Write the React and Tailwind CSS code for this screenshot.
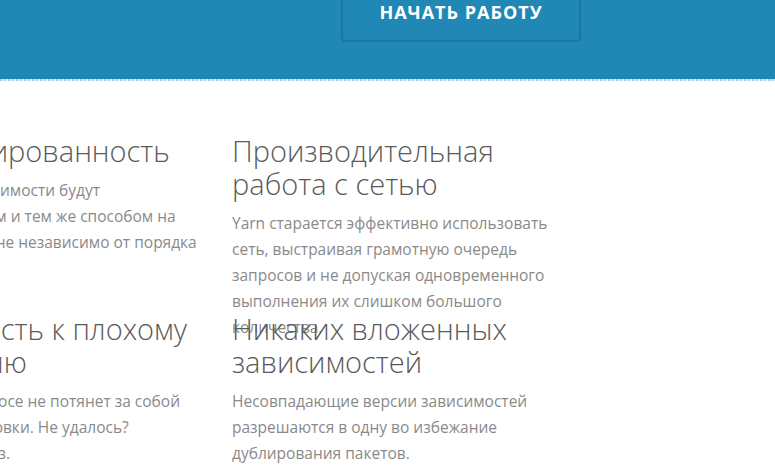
import React from 'react';

// строки разбиты вручную, как на исходной странице
const features = [
  [
    {
      title: 'Детерминированность',
      lines: [
        'Одни и те же зависимости будут',
        'установлены одним и тем же способом на',
        'любой иной машине независимо от порядка',
        'установки.',
      ],
    },
    {
      title: 'Производительная работа с сетью',
      lines: [
        'Yarn старается эффективно использовать',
        'сеть, выстраивая грамотную очередь',
        'запросов и не допуская одновременного',
        'выполнения их слишком большого',
        'количества.',
      ],
    },
  ],
  [
    {
      title: 'Устойчивость к плохому соединению',
      lines: [
        'Сбой в одном запросе не потянет за собой',
        'провал всей установки. Не удалось?',
        'Попробуем ещё раз.',
      ],
    },
    {
      title: 'Никаких вложенных зависимостей',
      lines: [
        'Несовпадающие версии зависимостей',
        'разрешаются в одну во избежание',
        'дублирования пакетов.',
      ],
    },
  ],
];

const Feature = ({ title, lines }) => (
  <div className="w-[340px] shrink-0">
    <h3 className="text-[29px] leading-[33px] font-light text-[#5a5a5a]">{title}</h3>
    <p className="mt-[10px] text-[15.5px] leading-[26px] text-[#8a8a8a] whitespace-nowrap">
      {lines.map((l, i) => (
        <React.Fragment key={i}>
          {l}
          {i < lines.length - 1 && <br />}
        </React.Fragment>
      ))}
    </p>
  </div>
);

export default function App() {
  return (
    <div className="w-[775px] h-[468px] overflow-hidden bg-white" style={{ fontFamily: '"Open Sans", "Noto Sans", sans-serif' }}>
      {/* низ шапки с кнопкой */}
      <div className="h-[79px] bg-[#2188b6] flex">
        <button className="ml-[341px] mt-[-18px] w-[240px] h-[60px] rounded-[4px] border-2 border-[#1b77a1] text-white font-bold text-[18px] tracking-[1px] flex items-end justify-center pb-[14px]">
          НАЧАТЬ РАБОТУ
        </button>
      </div>
      <div className="h-[2px] bg-[repeating-linear-gradient(90deg,#8fc2dc_0px,#d7eaf3_3px,#b3d6e7_5px,#f1f8fb_8px)]" />

      <div className="ml-[-145px] pt-[53px]">
        {features.map((row, i) => (
          <div key={i} className="h-[178px] flex gap-[37px]">
            {row.map((f) => (
              <Feature key={f.title} {...f} />
            ))}
          </div>
        ))}
      </div>
    </div>
  );
}
